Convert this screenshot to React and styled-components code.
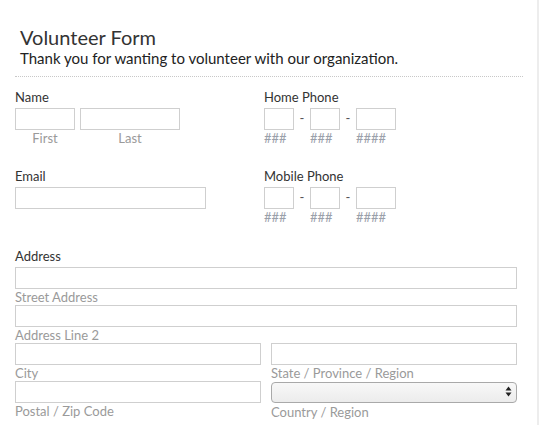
import React from 'react';
import styled, { createGlobalStyle } from 'styled-components';

const GlobalStyle = createGlobalStyle`
  html, body {
    margin: 0;
    padding: 0;
    background: #fff;
  }
  body {
    font-family: Lato, "Open Sans", Arial, sans-serif;
    color: #333;
  }
  * { box-sizing: border-box; }
`;

const Page = styled.div`
  width: 539px;
  height: 425px;
  overflow: hidden;
  border-right: 2px solid #ededed;
`;

const Form = styled.form`
  width: 523px;
  padding: 25px 0 0 15px;
`;

const Header = styled.div`
  padding: 0 0 9px 5px;
  border-bottom: 1px dotted #c8c8c8;
`;

const Title = styled.h1`
  margin: 0;
  font-size: 20px;
  line-height: 24px;
  font-weight: 400;
  color: #333;
`;

const Subtitle = styled.p`
  margin: 0;
  font-size: 15px;
  line-height: 18px;
  color: #222;
`;

const Grid = styled.div`
  display: grid;
  grid-template-columns: 249px 1fr;
  row-gap: 22px;
  padding-top: 12px;
`;

const Field = styled.div`
  display: flex;
  flex-direction: column;
`;

const Label = styled.label`
  font-size: 13px;
  line-height: 16px;
  color: #333;
  margin-bottom: 3px;
`;

const Row = styled.div`
  display: flex;
  align-items: flex-start;
  gap: ${(p) => p.$gap ?? 5}px;
`;

const Part = styled.div`
  display: flex;
  flex-direction: column;
  align-items: ${(p) => (p.$center ? 'center' : 'flex-start')};
  width: ${(p) => (p.$w ? `${p.$w}px` : 'auto')};
  flex: ${(p) => (p.$grow ? 1 : 'none')};
`;

const Input = styled.input`
  width: 100%;
  height: 22px;
  margin: 0;
  padding: 2px 4px;
  border: 1px solid #cfcfcf;
  border-radius: 0;
  background: #fff;
  font: inherit;
  font-size: 13px;
  outline: none;
`;

const Sub = styled.span`
  font-size: 13px;
  line-height: 16px;
  color: #9a9a9a;
  white-space: nowrap;
`;

const Hash = styled.span`
  font-size: 13px;
  line-height: 16px;
  color: #9aa0aa;
  white-space: nowrap;
`;

const Dash = styled.span`
  width: 16px;
  height: 22px;
  line-height: 21px;
  text-align: center;
  font-size: 13px;
  color: #555;
`;

const Address = styled.div`
  width: 502px;
  margin-top: 23px;
  display: flex;
  flex-direction: column;
`;

const AddressGrid = styled.div`
  display: grid;
  grid-template-columns: 1fr 1fr;
  column-gap: 10px;
`;

const SelectWrap = styled.div`
  position: relative;
  width: 100%;
`;

const Select = styled.select`
  appearance: none;
  -webkit-appearance: none;
  width: 100%;
  height: 21px;
  margin: 0 0 1px;
  padding: 0 20px 0 6px;
  border: 1px solid #a9a9a9;
  border-radius: 4px;
  background: linear-gradient(#f8f8f8, #ececec);
  font: inherit;
  font-size: 13px;
  outline: none;
`;

const Arrows = styled.svg`
  position: absolute;
  right: 5px;
  top: 5px;
  pointer-events: none;
`;

const PhoneField = ({ label }) => (
  <Field>
    <Label>{label}</Label>
    <Row $gap={0}>
      <Part $w={30}>
        <Input />
        <Hash>###</Hash>
      </Part>
      <Dash>-</Dash>
      <Part $w={30}>
        <Input />
        <Hash>###</Hash>
      </Part>
      <Dash>-</Dash>
      <Part $w={40}>
        <Input />
        <Hash>####</Hash>
      </Part>
    </Row>
  </Field>
);

const Cell = ({ children }) => <Part $grow>{children}</Part>;

export default function App() {
  return (
    <Page>
      <GlobalStyle />
      <Form onSubmit={(e) => e.preventDefault()}>
        <Header>
          <Title>Volunteer Form</Title>
          <Subtitle>Thank you for wanting to volunteer with our organization.</Subtitle>
        </Header>

        <Grid>
          <Field>
            <Label>Name</Label>
            <Row>
              <Part $w={60} $center>
                <Input />
                <Sub>First</Sub>
              </Part>
              <Part $w={100} $center>
                <Input />
                <Sub>Last</Sub>
              </Part>
            </Row>
          </Field>
          <PhoneField label="Home Phone" />

          <Field>
            <Label>Email</Label>
            <Part $w={191}>
              <Input type="email" />
            </Part>
          </Field>
          <PhoneField label="Mobile Phone" />
        </Grid>

        <Address>
          <Label>Address</Label>
          <Input />
          <Sub>Street Address</Sub>
          <Input />
          <Sub>Address Line 2</Sub>
          <AddressGrid>
            <Cell>
              <Input />
              <Sub>City</Sub>
            </Cell>
            <Cell>
              <Input />
              <Sub>State / Province / Region</Sub>
            </Cell>
            <Cell>
              <Input />
              <Sub>Postal / Zip Code</Sub>
            </Cell>
            <Cell>
              <SelectWrap>
                <Select defaultValue="">
                  <option value=""></option>
                </Select>
                <Arrows width="7" height="11" viewBox="0 0 7 11">
                  <path d="M3.5 0.5 L6.5 4.5 H0.5 Z" fill="#222" />
                  <path d="M3.5 10.5 L6.5 6.5 H0.5 Z" fill="#222" />
                </Arrows>
              </SelectWrap>
              <Sub>Country / Region</Sub>
            </Cell>
          </AddressGrid>
        </Address>
      </Form>
    </Page>
  );
}
